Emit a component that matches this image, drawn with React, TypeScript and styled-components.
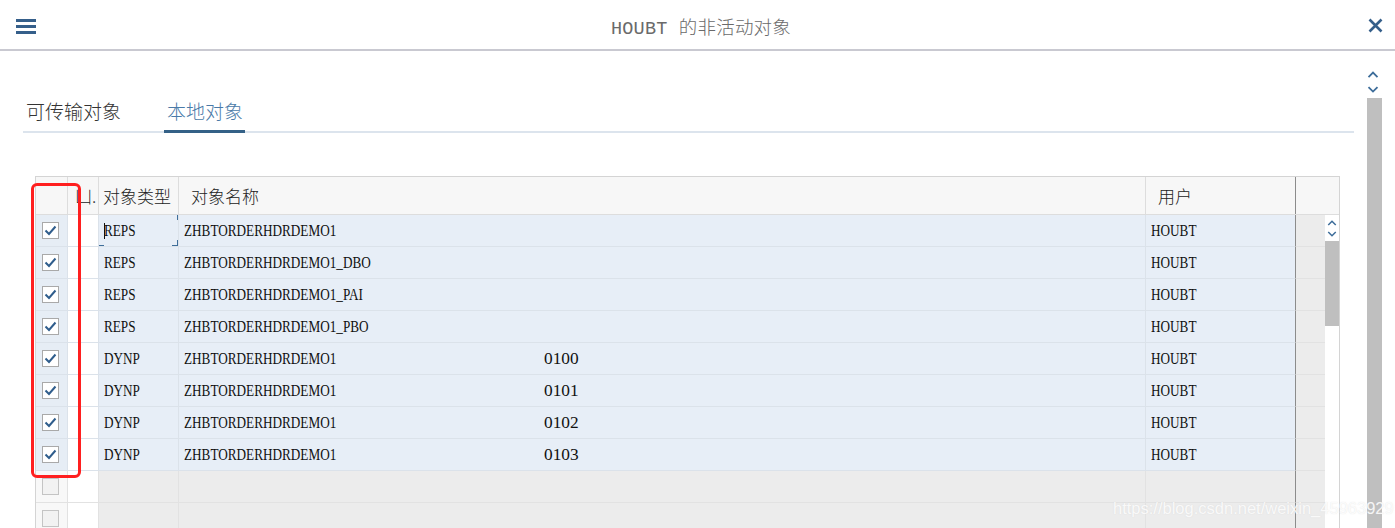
import React from "react";
import styled, { createGlobalStyle } from "styled-components";

const GlobalStyle = createGlobalStyle`
  html, body {
    margin: 0;
    padding: 0;
    background: #ffffff;
    font-family: "Noto Sans CJK SC", "Liberation Sans", sans-serif;
  }
  * {
    box-sizing: border-box;
  }
`;

const Page = styled.div`
  width: 1395px;
  height: 528px;
  overflow: hidden;
  position: relative;
  display: flex;
  flex-direction: column;
`;

const TitleBar = styled.header`
  height: 51px;
  flex-shrink: 0;
  border-bottom: 2px solid #c9c9d1;
  display: flex;
  align-items: center;
  justify-content: space-between;
  padding: 0 9px 0 16px;
`;

const Title = styled.div`
  font-family: "Liberation Mono", "Noto Sans CJK SC", monospace;
  font-size: 18.5px;
  font-weight: 300;
  color: #6a6a6a;
  letter-spacing: 0.2px;
  padding-top: 3px;
`;

const IconButton = styled.div`
  width: 21px;
  height: 20px;
  display: flex;
  align-items: center;
  justify-content: center;
  padding-top: 2px;
`;

const Body = styled.div`
  flex: 1;
  display: flex;
  min-height: 0;
`;

const Main = styled.div`
  flex: none;
  width: 1354px;
  padding: 47px 0 0 23px;
  display: flex;
  flex-direction: column;
`;

const TabBar = styled.div`
  display: flex;
  gap: 41px;
  border-bottom: 2px solid #dce4ed;
`;

const Tab = styled.div<{ $active?: boolean }>`
  font-size: 19px;
  font-weight: 300;
  line-height: 26px;
  padding: 0 2px 6px 3px;
  margin-bottom: -2px;
  color: ${(p) => (p.$active ? "#4a7aa8" : "#333")};
  border-bottom: 3px solid ${(p) => (p.$active ? "#346187" : "transparent")};
`;

const PageScroll = styled.div`
  flex: 1;
  display: flex;
  flex-direction: column;
  align-items: flex-start;
  padding: 20px 0 0 13px;
  gap: 1px;
`;

const Thumb = styled.div<{ $h: number }>`
  width: 15px;
  height: ${(p) => p.$h}px;
  background: #bfbfbf;
  margin-top: 4px;
`;

const Table = styled.div`
  margin: 43px 0 0 12px;
  width: 1305px;
  border: 1px solid #d4d4d4;
  border-bottom: none;
`;

const HeadRow = styled.div`
  display: grid;
  grid-template-columns: 31px 31px 80px 1fr 150px 30px 14px;
  height: 38px;
  background: #f7f7f7;
  border-bottom: 1px solid #dddddd;
`;

const HeadCell = styled.div<{ $dark?: boolean; $pad?: number; $plain?: boolean }>`
  font-size: 17px;
  font-weight: 300;
  color: #222;
  display: flex;
  align-items: center;
  padding-left: ${(p) => p.$pad ?? 5}px;
  white-space: nowrap;
  overflow: hidden;
  border-left: 1px solid ${(p) => (p.$plain ? "transparent" : p.$dark ? "#8c8c8c" : "#dddddd")};
  &:first-child {
    border-left: none;
  }
`;

const BodyArea = styled.div`
  display: flex;
`;

const Rows = styled.div`
  flex: 1;
`;

const Row = styled.div`
  display: grid;
  grid-template-columns: 31px 31px 80px 1fr 150px 30px;
  height: 32px;
`;

const Cell = styled.div<{ $bg: string; $dark?: boolean; $pad?: number; $line: string }>`
  position: relative;
  background: ${(p) => p.$bg};
  border-bottom: 1px solid ${(p) => p.$line};
  border-left: 1px solid ${(p) => (p.$dark ? "#8c8c8c" : p.$line)};
  display: flex;
  align-items: center;
  padding-left: ${(p) => p.$pad ?? 5}px;
  white-space: nowrap;
  overflow: hidden;
  &:first-child {
    border-left: none;
  }
`;

const Text = styled.span<{ $wide?: boolean }>`
  display: inline-block;
  font-family: "Liberation Serif", serif;
  font-size: 16.5px;
  color: #111;
  transform: scaleX(${(p) => (p.$wide ? 1.05 : 0.8)});
  transform-origin: left center;
  padding-top: 1px;
`;

const NameSplit = styled.div`
  display: grid;
  grid-template-columns: 360px auto;
`;

const Box = styled.div<{ $checked: boolean }>`
  width: 17px;
  height: 17px;
  border: 1px solid ${(p) => (p.$checked ? "#a9a9a9" : "#c4c4c4")};
  background: ${(p) => (p.$checked ? "#ffffff" : "#f2f2f2")};
  display: flex;
  align-items: center;
  justify-content: center;
`;

const Corner = styled.span<{ $pos: string }>`
  position: absolute;
  width: 6px;
  height: 6px;
  border-color: #3f6e9a;
  border-style: solid;
  border-width: 0;
  ${(p) => p.$pos}
`;

const Caret = styled.span`
  position: absolute;
  left: 5px;
  top: 8px;
  width: 1px;
  height: 16px;
  background: #111;
`;

const InnerScroll = styled.div`
  width: 14px;
  background: #ffffff;
  display: flex;
  flex-direction: column;
  align-items: center;
  padding-top: 5px;
`;

const InnerThumb = styled.div`
  width: 14px;
  height: 85px;
  margin-top: 4px;
  background: #bfbfbf;
`;

const Marker = styled.div`
  position: absolute;
  left: 31px;
  top: 183px;
  width: 50px;
  height: 295px;
  border: 3px solid #ff1f1f;
  border-radius: 6px;
  pointer-events: none;
`;

const Watermark = styled.div`
  position: absolute;
  left: 1113px;
  top: 499px;
  font-family: "Liberation Sans", sans-serif;
  font-size: 16.5px;
  color: rgba(255, 255, 255, 0.85);
  text-shadow: 0 0 1px rgba(200, 200, 200, 0.5);
  white-space: nowrap;
`;

const Chevron = ({ up, size = 12 }: { up?: boolean; size?: number }) => (
  <svg width={size} height={size * 0.6} viewBox="0 0 12 7">
    <polyline
      points={up ? "1.5,6 6,1.5 10.5,6" : "1.5,1 6,5.5 10.5,1"}
      fill="none"
      stroke="#3d6d9a"
      strokeWidth="1.8"
    />
  </svg>
);

const Check = () => (
  <svg width="13" height="11" viewBox="0 0 13 11">
    <polyline points="1.5,5.5 5,9 11.5,1.5" fill="none" stroke="#2f5d8c" strokeWidth="2" />
  </svg>
);

type Item = { type: string; name: string; num?: string };

const items: Item[] = [
  { type: "REPS", name: "ZHBTORDERHDRDEMO1" },
  { type: "REPS", name: "ZHBTORDERHDRDEMO1_DBO" },
  { type: "REPS", name: "ZHBTORDERHDRDEMO1_PAI" },
  { type: "REPS", name: "ZHBTORDERHDRDEMO1_PBO" },
  { type: "DYNP", name: "ZHBTORDERHDRDEMO1", num: "0100" },
  { type: "DYNP", name: "ZHBTORDERHDRDEMO1", num: "0101" },
  { type: "DYNP", name: "ZHBTORDERHDRDEMO1", num: "0102" },
  { type: "DYNP", name: "ZHBTORDERHDRDEMO1", num: "0103" },
];

const BLUE = "#e7eef7";
const BLUE_LINE = "#dbe2ea";
const GREY = "#ececec";
const GREY_LINE = "#e2e2e2";

function App() {
  return (
    <Page>
      <GlobalStyle />
      <TitleBar>
        <IconButton>
          <svg width="21" height="16" viewBox="0 0 21 16">
            <rect x="0" y="1" width="20" height="3" fill="#355f8a" />
            <rect x="0" y="7" width="20" height="3" fill="#355f8a" />
            <rect x="0" y="13" width="20" height="3" fill="#355f8a" />
          </svg>
        </IconButton>
        <Title>HOUBT 的非活动对象</Title>
        <IconButton>
          <svg width="15" height="15" viewBox="0 0 15 15">
            <path d="M1.5 1.5 L13.5 13.5 M13.5 1.5 L1.5 13.5" stroke="#355f8a" strokeWidth="2.6" />
          </svg>
        </IconButton>
      </TitleBar>
      <Body>
        <Main>
          <TabBar>
            <Tab>可传输对象</Tab>
            <Tab $active>本地对象</Tab>
          </TabBar>
          <Table>
            <HeadRow>
              <HeadCell />
              <HeadCell $pad={7}>凵.</HeadCell>
              <HeadCell $pad={4}>对象类型</HeadCell>
              <HeadCell $pad={12}>对象名称</HeadCell>
              <HeadCell $pad={12}>用户</HeadCell>
              <HeadCell $dark />
              <HeadCell $plain />
            </HeadRow>
            <BodyArea>
              <Rows>
                {items.map((it, i) => (
                  <Row key={i}>
                    <Cell $bg="#e6edf5" $line={BLUE_LINE} $pad={6}>
                      <Box $checked>
                        <Check />
                      </Box>
                    </Cell>
                    <Cell $bg="#ffffff" $line={BLUE_LINE} />
                    <Cell $bg={BLUE} $line={BLUE_LINE}>
                      {i === 0 && (
                        <>
                          <Corner $pos="left:-1px;top:-1px;border-left-width:1px;border-top-width:1px;" />
                          <Corner $pos="right:0;top:-1px;border-right-width:1px;border-top-width:1px;" />
                          <Corner $pos="left:-1px;bottom:0;border-left-width:1px;border-bottom-width:1px;" />
                          <Corner $pos="right:0;bottom:0;border-right-width:1px;border-bottom-width:1px;" />
                          <Caret />
                        </>
                      )}
                      <Text>{it.type}</Text>
                    </Cell>
                    <Cell $bg={BLUE} $line={BLUE_LINE}>
                      <NameSplit>
                        <Text>{it.name}</Text>
                        {it.num && <Text $wide>{it.num}</Text>}
                      </NameSplit>
                    </Cell>
                    <Cell $bg={BLUE} $line={BLUE_LINE}>
                      <Text>HOUBT</Text>
                    </Cell>
                    <Cell $bg={GREY} $line={GREY_LINE} $dark />
                  </Row>
                ))}
                {[0, 1].map((i) => (
                  <Row key={"e" + i}>
                    <Cell $bg="#f8f8f8" $line={GREY_LINE} $pad={6}>
                      <Box $checked={false} />
                    </Cell>
                    <Cell $bg="#ffffff" $line={GREY_LINE} />
                    <Cell $bg={GREY} $line={GREY_LINE} />
                    <Cell $bg={GREY} $line={GREY_LINE} />
                    <Cell $bg={GREY} $line={GREY_LINE} />
                    <Cell $bg={GREY} $line={GREY_LINE} $dark />
                  </Row>
                ))}
              </Rows>
              <InnerScroll>
                <Chevron up size={10} />
                <div style={{ height: 5 }} />
                <Chevron size={10} />
                <InnerThumb />
              </InnerScroll>
            </BodyArea>
          </Table>
        </Main>
        <PageScroll>
          <Chevron up />
          <div style={{ height: 6 }} />
          <Chevron />
          <Thumb $h={440} />
        </PageScroll>
      </Body>
      <Marker />
      <Watermark>https://blog.csdn.net/weixin_45963929</Watermark>
    </Page>
  );
}

export default App;
